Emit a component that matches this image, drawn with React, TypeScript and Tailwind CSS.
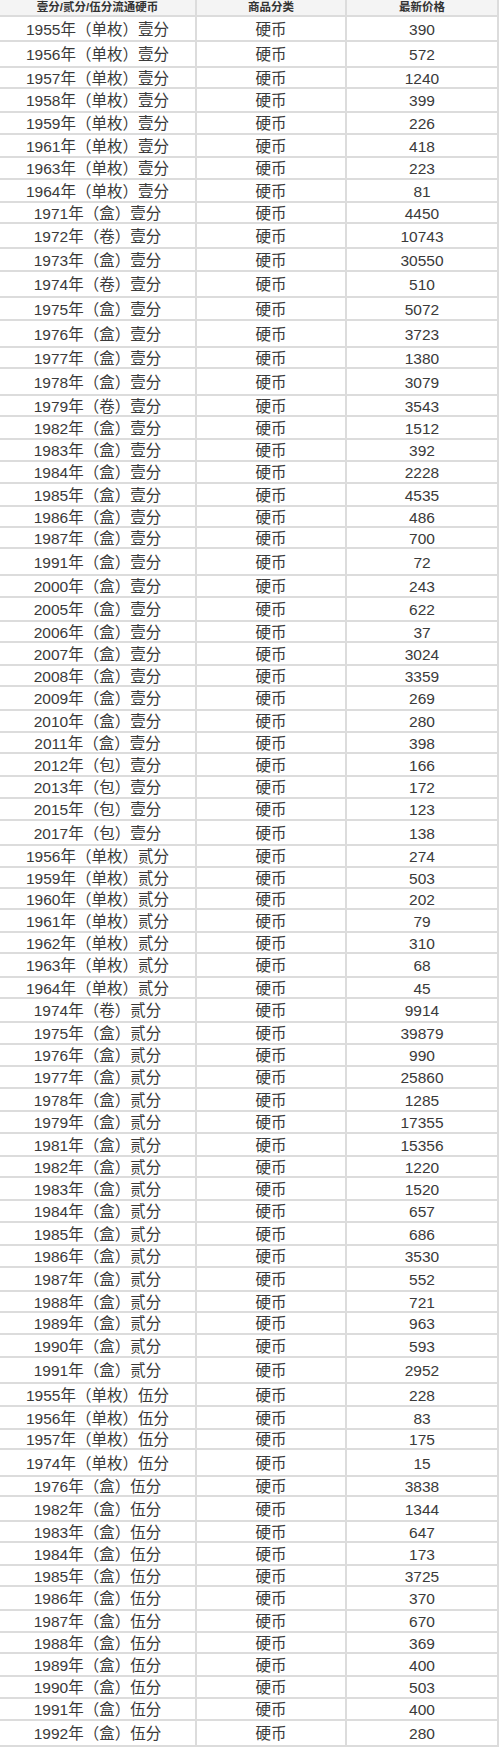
import React from 'react';

// [名称, 价格]
const ROWS: [string, string][] = [
  ['1955年（单枚）壹分', '390'],
  ['1956年（单枚）壹分', '572'],
  ['1957年（单枚）壹分', '1240'],
  ['1958年（单枚）壹分', '399'],
  ['1959年（单枚）壹分', '226'],
  ['1961年（单枚）壹分', '418'],
  ['1963年（单枚）壹分', '223'],
  ['1964年（单枚）壹分', '81'],
  ['1971年（盒）壹分', '4450'],
  ['1972年（卷）壹分', '10743'],
  ['1973年（盒）壹分', '30550'],
  ['1974年（卷）壹分', '510'],
  ['1975年（盒）壹分', '5072'],
  ['1976年（盒）壹分', '3723'],
  ['1977年（盒）壹分', '1380'],
  ['1978年（盒）壹分', '3079'],
  ['1979年（卷）壹分', '3543'],
  ['1982年（盒）壹分', '1512'],
  ['1983年（盒）壹分', '392'],
  ['1984年（盒）壹分', '2228'],
  ['1985年（盒）壹分', '4535'],
  ['1986年（盒）壹分', '486'],
  ['1987年（盒）壹分', '700'],
  ['1991年（盒）壹分', '72'],
  ['2000年（盒）壹分', '243'],
  ['2005年（盒）壹分', '622'],
  ['2006年（盒）壹分', '37'],
  ['2007年（盒）壹分', '3024'],
  ['2008年（盒）壹分', '3359'],
  ['2009年（盒）壹分', '269'],
  ['2010年（盒）壹分', '280'],
  ['2011年（盒）壹分', '398'],
  ['2012年（包）壹分', '166'],
  ['2013年（包）壹分', '172'],
  ['2015年（包）壹分', '123'],
  ['2017年（包）壹分', '138'],
  ['1956年（单枚）贰分', '274'],
  ['1959年（单枚）贰分', '503'],
  ['1960年（单枚）贰分', '202'],
  ['1961年（单枚）贰分', '79'],
  ['1962年（单枚）贰分', '310'],
  ['1963年（单枚）贰分', '68'],
  ['1964年（单枚）贰分', '45'],
  ['1974年（卷）贰分', '9914'],
  ['1975年（盒）贰分', '39879'],
  ['1976年（盒）贰分', '990'],
  ['1977年（盒）贰分', '25860'],
  ['1978年（盒）贰分', '1285'],
  ['1979年（盒）贰分', '17355'],
  ['1981年（盒）贰分', '15356'],
  ['1982年（盒）贰分', '1220'],
  ['1983年（盒）贰分', '1520'],
  ['1984年（盒）贰分', '657'],
  ['1985年（盒）贰分', '686'],
  ['1986年（盒）贰分', '3530'],
  ['1987年（盒）贰分', '552'],
  ['1988年（盒）贰分', '721'],
  ['1989年（盒）贰分', '963'],
  ['1990年（盒）贰分', '593'],
  ['1991年（盒）贰分', '2952'],
  ['1955年（单枚）伍分', '228'],
  ['1956年（单枚）伍分', '83'],
  ['1957年（单枚）伍分', '175'],
  ['1974年（单枚）伍分', '15'],
  ['1976年（盒）伍分', '3838'],
  ['1982年（盒）伍分', '1344'],
  ['1983年（盒）伍分', '647'],
  ['1984年（盒）伍分', '173'],
  ['1985年（盒）伍分', '3725'],
  ['1986年（盒）伍分', '370'],
  ['1987年（盒）伍分', '670'],
  ['1988年（盒）伍分', '369'],
  ['1989年（盒）伍分', '400'],
  ['1990年（盒）伍分', '503'],
  ['1991年（盒）伍分', '400'],
  ['1992年（盒）伍分', '280'],
];

// row bottom edges measured off the picture (header first)
const EDGES = [
  17, 42, 68, 89, 113, 135, 158, 180, 203, 224, 249, 272, 298, 321, 348, 369, 396, 417, 440, 462,
  484, 507, 528, 549, 576, 598, 622, 643, 666, 687, 711, 733, 754, 777, 799, 821, 846, 868, 889,
  910, 933, 954, 978, 999, 1023, 1045, 1067, 1089, 1112, 1134, 1157, 1178, 1201, 1223, 1246, 1268,
  1292, 1313, 1335, 1358, 1384, 1407, 1430, 1450, 1477, 1497, 1522, 1543, 1566, 1587, 1611, 1633,
  1654, 1677, 1699, 1721, 1747,
];

const font = { fontFamily: '"Liberation Sans", "Noto Sans CJK SC", sans-serif' };

export default function App() {
  return (
    <div className="w-[500px] h-[1749px] bg-white overflow-hidden text-[#3a3a3a]" style={font}>
      <div className="w-[499px] flex flex-col border-r-2 border-[#dcdcdc]">
        <div className="flex h-[17px] bg-[#f4f4f4] border-b-2 border-[#dcdcdc] text-[11.5px] font-bold text-[#333] leading-none">
          <div className="w-[197px] shrink-0 border-r-2 border-[#dcdcdc] flex items-center justify-center">壹分/贰分/伍分流通硬币</div>
          <div className="w-[150px] shrink-0 border-r-2 border-[#dcdcdc] flex items-center justify-center">商品分类</div>
          <div className="flex-1 flex items-center justify-center">最新价格</div>
        </div>
        {ROWS.map(([name, price], i) => (
          <div
            key={i}
            className="flex border-b-2 border-[#dcdcdc] text-[15.5px] leading-none"
            style={{ height: EDGES[i + 1] - EDGES[i] }}
          >
            <div className="w-[197px] shrink-0 border-r-2 border-[#dcdcdc] flex items-center justify-center pt-[2px]">{name}</div>
            <div className="w-[150px] shrink-0 border-r-2 border-[#dcdcdc] flex items-center justify-center pt-[2px]">硬币</div>
            <div className="flex-1 flex items-center justify-center pt-[2px]">{price}</div>
          </div>
        ))}
      </div>
    </div>
  );
}
